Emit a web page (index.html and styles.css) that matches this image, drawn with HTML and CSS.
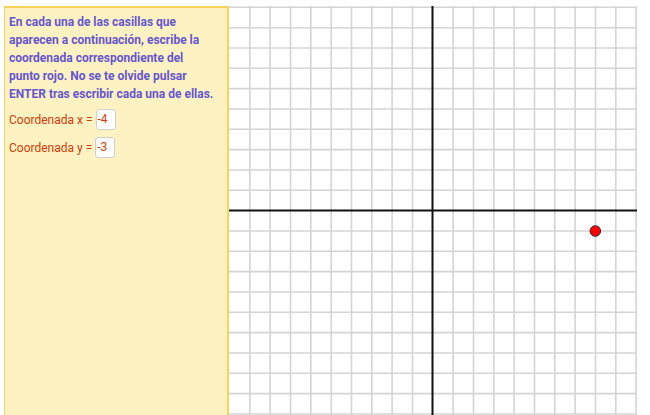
FILE: index.html
```html
<!DOCTYPE html>
<html>
<head>
<meta charset="utf-8">
<link rel="stylesheet" href="styles.css">
</head>
<body>
<div class="app">
  <div class="panel">
    <p class="intro">En cada una de las casillas que aparecen a continuación, escribe la coordenada correspondiente del punto rojo. No se te olvide pulsar ENTER tras escribir cada una de ellas.</p>
    <div class="row"><span class="label">Coordenada x =</span><span class="box">-4</span></div>
    <div class="row"><span class="label">Coordenada y =</span><span class="box">-3</span></div>
  </div>
  <div class="graph">
    <svg width="408" height="409" viewBox="0 0 408 409">
      <g stroke="#d4d4d4" stroke-width="1.6">
        <line x1="20.8" y1="0" x2="20.8" y2="409"/>
        <line x1="41.1" y1="0" x2="41.1" y2="409"/>
        <line x1="61.5" y1="0" x2="61.5" y2="409"/>
        <line x1="81.8" y1="0" x2="81.8" y2="409"/>
        <line x1="102.2" y1="0" x2="102.2" y2="409"/>
        <line x1="122.5" y1="0" x2="122.5" y2="409"/>
        <line x1="142.8" y1="0" x2="142.8" y2="409"/>
        <line x1="163.1" y1="0" x2="163.1" y2="409"/>
        <line x1="183.5" y1="0" x2="183.5" y2="409"/>
        <line x1="224.1" y1="0" x2="224.1" y2="409"/>
        <line x1="244.5" y1="0" x2="244.5" y2="409"/>
        <line x1="264.8" y1="0" x2="264.8" y2="409"/>
        <line x1="285.1" y1="0" x2="285.1" y2="409"/>
        <line x1="305.5" y1="0" x2="305.5" y2="409"/>
        <line x1="325.8" y1="0" x2="325.8" y2="409"/>
        <line x1="346.1" y1="0" x2="346.1" y2="409"/>
        <line x1="366.5" y1="0" x2="366.5" y2="409"/>
        <line x1="386.8" y1="0" x2="386.8" y2="409"/>
        <line x1="407.1" y1="1" x2="407.1" y2="409"/>
        <line x1="0" y1="1.3" x2="408" y2="1.3"/>
        <line x1="0" y1="21.7" x2="408" y2="21.7"/>
        <line x1="0" y1="42" x2="408" y2="42"/>
        <line x1="0" y1="62.3" x2="408" y2="62.3"/>
        <line x1="0" y1="82.6" x2="408" y2="82.6"/>
        <line x1="0" y1="103" x2="408" y2="103"/>
        <line x1="0" y1="123.3" x2="408" y2="123.3"/>
        <line x1="0" y1="143.6" x2="408" y2="143.6"/>
        <line x1="0" y1="164" x2="408" y2="164"/>
        <line x1="0" y1="184.3" x2="408" y2="184.3"/>
        <line x1="0" y1="225" x2="408" y2="225"/>
        <line x1="0" y1="245.3" x2="408" y2="245.3"/>
        <line x1="0" y1="265.6" x2="408" y2="265.6"/>
        <line x1="0" y1="286" x2="408" y2="286"/>
        <line x1="0" y1="306.3" x2="408" y2="306.3"/>
        <line x1="0" y1="326.6" x2="408" y2="326.6"/>
        <line x1="0" y1="347" x2="408" y2="347"/>
        <line x1="0" y1="367.3" x2="408" y2="367.3"/>
        <line x1="0" y1="387.6" x2="408" y2="387.6"/>
        <line x1="0" y1="408" x2="408" y2="408"/>
      </g>
      <g stroke="#111" stroke-width="2">
        <line x1="203.5" y1="0" x2="203.5" y2="409"/>
        <line x1="0" y1="204.6" x2="408" y2="204.6"/>
      </g>
      <circle cx="366.3" cy="225" r="5.3" fill="#ff0000" stroke="#3a2a3a" stroke-width="1"/>
    </svg>
  </div>
</div>
</body>
</html>
```
FILE: styles.css
```css
html, body {
  margin: 0;
  padding: 0;
  background: #ffffff;
}
.app {
  display: flex;
  align-items: stretch;
  padding: 6px 0 0 4px;
  height: 409px;
  overflow: hidden;
}
.panel {
  background: #fff2c2;
  border-top: 2px solid #f6d35c;
  border-left: 1px solid #f6d35c;
  border-right: 2px solid #f6d35c;
  padding: 5px 0 0 4px;
  box-sizing: border-box;
  width: 225px;
  font-family: Roboto, "Liberation Sans", sans-serif;
}
.intro {
  margin: 0;
  width: 207px;
  color: #6456cf;
  font-weight: bold;
  font-size: 12px;
  line-height: 18px;
}
.row {
  display: flex;
  align-items: center;
  color: #d03c08;
  font-size: 12px;
  margin-top: 6px;
}
.row + .row {
  margin-top: 7px;
}
.label {
  margin-right: 3px;
}
.box {
  display: inline-block;
  width: 17px;
  height: 19px;
  line-height: 19px;
  background: #fff;
  border: 1px solid #cfcfcf;
  border-radius: 3px;
  padding-left: 1px;
}
.graph {
  width: 408px;
  height: 409px;
}
.graph svg {
  display: block;
}
```
